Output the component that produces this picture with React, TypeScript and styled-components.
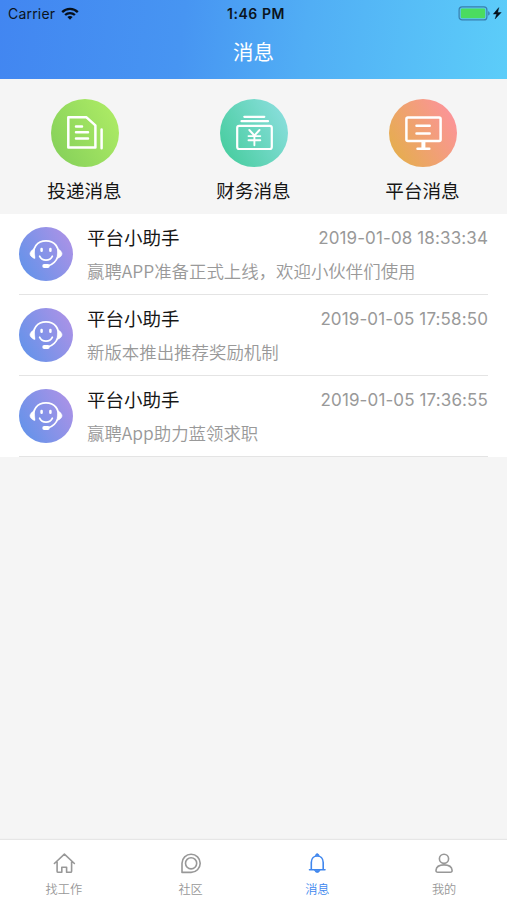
import React from "react";
import styled, { createGlobalStyle } from "styled-components";

const GlobalStyle = createGlobalStyle`
  * { box-sizing: border-box; }
  html, body, #root { height: 100%; }
  body {
    margin: 0;
    background: #f5f5f5;
    font-family: "Noto Sans CJK SC", sans-serif;
  }
`;

const Screen = styled.div`
  display: flex;
  flex-direction: column;
  width: 100%;
  height: 900px;
  overflow: hidden;
  background: #f5f5f5;
`;

const Header = styled.header`
  height: 79px;
  flex: none;
  background: linear-gradient(97deg, #4286f1 0%, #4795f2 36%, #51aef5 60%, #5ccdf9 100%);
`;

const StatusBar = styled.div`
  display: grid;
  grid-template-columns: 1fr auto 1fr;
  align-items: center;
  height: 27px;
  padding: 0 5px 0 8px;
  font-family: Inter, sans-serif;
  font-size: 14px;
  line-height: 27px;
  color: #0b1420;
`;

const Carrier = styled.div`
  display: flex;
  align-items: center;
  gap: 6px;
  letter-spacing: 0.2px;
`;

const Clock = styled.div`
  padding-left: 2px;
  font-size: 14px;
  font-weight: 600;
  letter-spacing: 0.55px;
`;

const Power = styled.div`
  display: flex;
  justify-content: flex-end;
  align-items: center;
`;

const Title = styled.h1`
  margin: 0;
  height: 49px;
  text-align: center;
  font-size: 20.5px;
  font-weight: 400;
  line-height: 49px;
  color: #fff;
`;

const Categories = styled.nav`
  display: grid;
  grid-template-columns: repeat(3, 1fr);
  flex: none;
  height: 135px;
  padding-top: 20px;
`;

const Category = styled.div`
  display: flex;
  flex-direction: column;
  align-items: center;
`;

const Disc = styled.div<{ $from: string; $to: string; $size: number }>`
  display: flex;
  flex: none;
  width: ${(p) => p.$size}px;
  height: ${(p) => p.$size}px;
  border-radius: 50%;
  background: linear-gradient(60deg, ${(p) => p.$from}, ${(p) => p.$to});
`;

const CategoryLabel = styled.div`
  margin-top: 8px;
  font-size: 18.6px;
  line-height: 29px;
  color: #161616;
`;

const List = styled.main`
  flex: none;
  padding: 0 19px;
  background: #fff;
`;

const Row = styled.article`
  display: flex;
  gap: 14px;
  height: 81px;
  padding-top: 13px;
  border-bottom: 1px solid #e4e4e4;
`;

const RowBody = styled.div`
  flex: 1;
  min-width: 0;
`;

const RowTop = styled.div`
  display: flex;
  justify-content: space-between;
  height: 20px;
  line-height: 20px;
`;

const Name = styled.div`
  font-size: 18.5px;
  color: #161616;
`;

const Time = styled.time`
  padding-top: 1px;
  font-family: Inter, sans-serif;
  font-size: 17px;
  letter-spacing: 0.12px;
  color: #999;
`;

const Message = styled.div`
  margin-top: 12px;
  font-size: 17.43px;
  line-height: 24px;
  font-weight: 350;
  color: #999;
  white-space: nowrap;
`;

const TabBar = styled.footer`
  display: grid;
  grid-template-columns: repeat(4, 1fr);
  height: 60px;
  margin-top: auto;
  background: #fff;
  box-shadow: 0 -1px 1px #e6e6e6;
`;

const Tab = styled.div<{ $active?: boolean }>`
  display: flex;
  flex-direction: column;
  align-items: center;
  padding: 11px 0 0 1px;
  color: ${(p) => (p.$active ? "#4087ee" : "#989898")};
`;

const TabLabel = styled.div`
  margin-top: 5px;
  font-size: 12.2px;
  line-height: 18px;
  font-weight: 350;
`;

const WifiIcon = () => (
  <svg width="18" height="13" viewBox="0 0 18 13" fill="none" stroke="#06101b" strokeWidth="2.3">
    <path d="M1.2 5.1C5.5.8 12.5.8 16.8 5.1" />
    <path d="M4.1 8C6.8 5.4 11.2 5.4 13.9 8" />
    <path d="M6.4 10 9 12.7 11.6 10C10.2 8.6 7.8 8.6 6.4 10Z" fill="#06101b" stroke="none" />
  </svg>
);

const BatteryIcon = () => (
  <svg width="44" height="15" viewBox="0 0 44 15">
    <rect x="1.1" y=".9" width="27.8" height="13" rx="3" fill="none" stroke="#397fac" strokeWidth="1.2" />
    <rect x="2.8" y="2.6" width="24.4" height="9.6" rx="1.2" fill="#4bdc60" />
    <path d="M30.2 5.2c2 .7 2 3.7 0 4.4Z" fill="#397fac" />
    <path d="M40.8 1.6 35.3 8.1h3.3l-1.5 4.9L43.2 6.5h-3.5Z" fill="#06101b" stroke="#06101b" strokeWidth=".4" />
  </svg>
);

const DocumentIcon = () => (
  <svg width="68" height="68" viewBox="0 0 68 68" fill="none" stroke="#fff" strokeWidth="2.5" strokeLinecap="round" strokeLinejoin="round">
    <path d="M17.3 18.3H35.5L44.4 26.4V48.5H17.3Z" />
    <path d="M25 27.5h6M25 33.3h12M25 39.5h12M50.6 30.5v18.7" />
  </svg>
);

const FinanceIcon = () => (
  <svg width="68" height="68" viewBox="0 0 68 68" fill="none" stroke="#fff" strokeLinecap="round" strokeLinejoin="round">
    <g strokeWidth="2.2">
      <path d="M24.3 17.8h20M21.5 22.2h26.5" />
      <rect x="17.2" y="26.8" width="34.6" height="23.2" rx="2" />
    </g>
    <path d="M29.3 31l5.1 5.5 5.1-5.5M28.5 37.1h11.8M28.5 41.3h11.8M34.4 36.7v9.6" strokeWidth="1.9" />
  </svg>
);

const MonitorIcon = () => (
  <svg width="68" height="68" viewBox="0 0 68 68" fill="none" stroke="#fff" strokeWidth="2.5" strokeLinecap="round" strokeLinejoin="round">
    <rect x="17.4" y="18.4" width="34.2" height="23.6" rx="1.5" />
    <path d="M27.5 26.7h13.2M27.5 34.5h13.2" />
    <path d="M34.4 43v6" strokeWidth="4" strokeLinecap="butt" />
    <path d="M28.5 49.7h11.8" />
  </svg>
);

const AssistantIcon = () => (
  <svg width="54" height="54" viewBox="0 0 54 54" fill="none" stroke="#fff" strokeLinecap="round" strokeLinejoin="round">
    <path d="M15.2 30.5C12.5 20.5 18.5 13.9 27 13.9S41.3 20.5 38.8 29.8C37.2 34.3 33.8 37.6 28.5 39.2" strokeWidth="1.8" />
    <path d="M14.9 22C12.2 23.3 11 25.4 11 26.8S12.5 30.5 15.5 31.4ZM39.1 22C41.8 23.3 43 25.4 43 26.8S41.5 30.5 38.5 31.4Z" fill="#fff" strokeWidth=".6" />
    <path d="M25.2 39h3.6" strokeWidth="3.8" />
    <path d="M22.6 22v1.8M31.4 22v1.8" strokeWidth="2.5" />
    <path d="M20.7 29.3c2.5 5 10.1 5 12.6 0" strokeWidth="1.8" />
  </svg>
);

const TabSvg = styled.svg.attrs({
  width: 24,
  height: 24,
  viewBox: "0 0 24 24",
  fill: "none",
  stroke: "currentColor",
  strokeWidth: 1.6,
  strokeLinejoin: "round",
  strokeLinecap: "round",
})`
  flex: none;
`;

const HomeIcon = () => (
  <TabSvg>
    <path d="M2.4 12.5 12.4 3.2 22.4 12.5M5.1 10.8V20.2Q5.1 21.3 6.2 21.3H9.8V16.3H14.6V21.3H18.5Q19.6 21.3 19.6 20.2V10.8" />
  </TabSvg>
);

const CommunityIcon = () => (
  <TabSvg>
    <path d="M3 21.4V12.3A9.1 9.1 0 1 1 12.1 21.4Z" />
    <circle cx="12.1" cy="12.3" r="5.6" />
  </TabSvg>
);

const BellIcon = () => (
  <TabSvg>
    <path d="M4.5 18.7H20M6.3 18.3V11.6C6.3 2.7 18.2 2.7 18.2 11.6V18.3" />
    <path d="M10.5 4.3C10.7 2.2 13.8 2.2 14 4.3ZM9.7 19.7C10.5 22 14 22 14.8 19.7Z" fill="currentColor" strokeWidth="1" />
  </TabSvg>
);

const ProfileIcon = () => (
  <TabSvg>
    <circle cx="12" cy="7.8" r="4.6" />
    <path d="M4 19.2C4.3 15.6 7.2 13.9 12 13.9S19.8 15.6 20.1 19.2Q20.2 21.3 18.2 21.3H5.9Q3.9 21.3 4 19.2Z" />
  </TabSvg>
);

const categories = [
  { label: "投递消息", from: "#82ce59", to: "#b1ee66", Icon: DocumentIcon },
  { label: "财务消息", from: "#40cb98", to: "#91e0e3", Icon: FinanceIcon },
  { label: "平台消息", from: "#e2b144", to: "#ff90a4", Icon: MonitorIcon },
];

const messages = [
  { time: "2019-01-08 18:33:34", text: "赢聘APP准备正式上线，欢迎小伙伴们使用" },
  { time: "2019-01-05 17:58:50", text: "新版本推出推荐奖励机制" },
  { time: "2019-01-05 17:36:55", text: "赢聘App助力蓝领求职" },
];

const tabs = [
  { label: "找工作", Icon: HomeIcon },
  { label: "社区", Icon: CommunityIcon },
  { label: "消息", Icon: BellIcon, active: true },
  { label: "我的", Icon: ProfileIcon },
];

export default function App() {
  return (
    <Screen>
      <GlobalStyle />
      <Header>
        <StatusBar>
          <Carrier>
            Carrier
            <WifiIcon />
          </Carrier>
          <Clock>1:46 PM</Clock>
          <Power>
            <BatteryIcon />
          </Power>
        </StatusBar>
        <Title>消息</Title>
      </Header>
      <Categories>
        {categories.map(({ label, from, to, Icon }) => (
          <Category key={label}>
            <Disc $from={from} $to={to} $size={68}>
              <Icon />
            </Disc>
            <CategoryLabel>{label}</CategoryLabel>
          </Category>
        ))}
      </Categories>
      <List>
        {messages.map(({ time, text }) => (
          <Row key={time}>
            <Disc $from="#5c93ea" $to="#b392e6" $size={54}>
              <AssistantIcon />
            </Disc>
            <RowBody>
              <RowTop>
                <Name>平台小助手</Name>
                <Time>{time}</Time>
              </RowTop>
              <Message>{text}</Message>
            </RowBody>
          </Row>
        ))}
      </List>
      <TabBar>
        {tabs.map(({ label, Icon, active }) => (
          <Tab key={label} $active={active}>
            <Icon />
            <TabLabel>{label}</TabLabel>
          </Tab>
        ))}
      </TabBar>
    </Screen>
  );
}
